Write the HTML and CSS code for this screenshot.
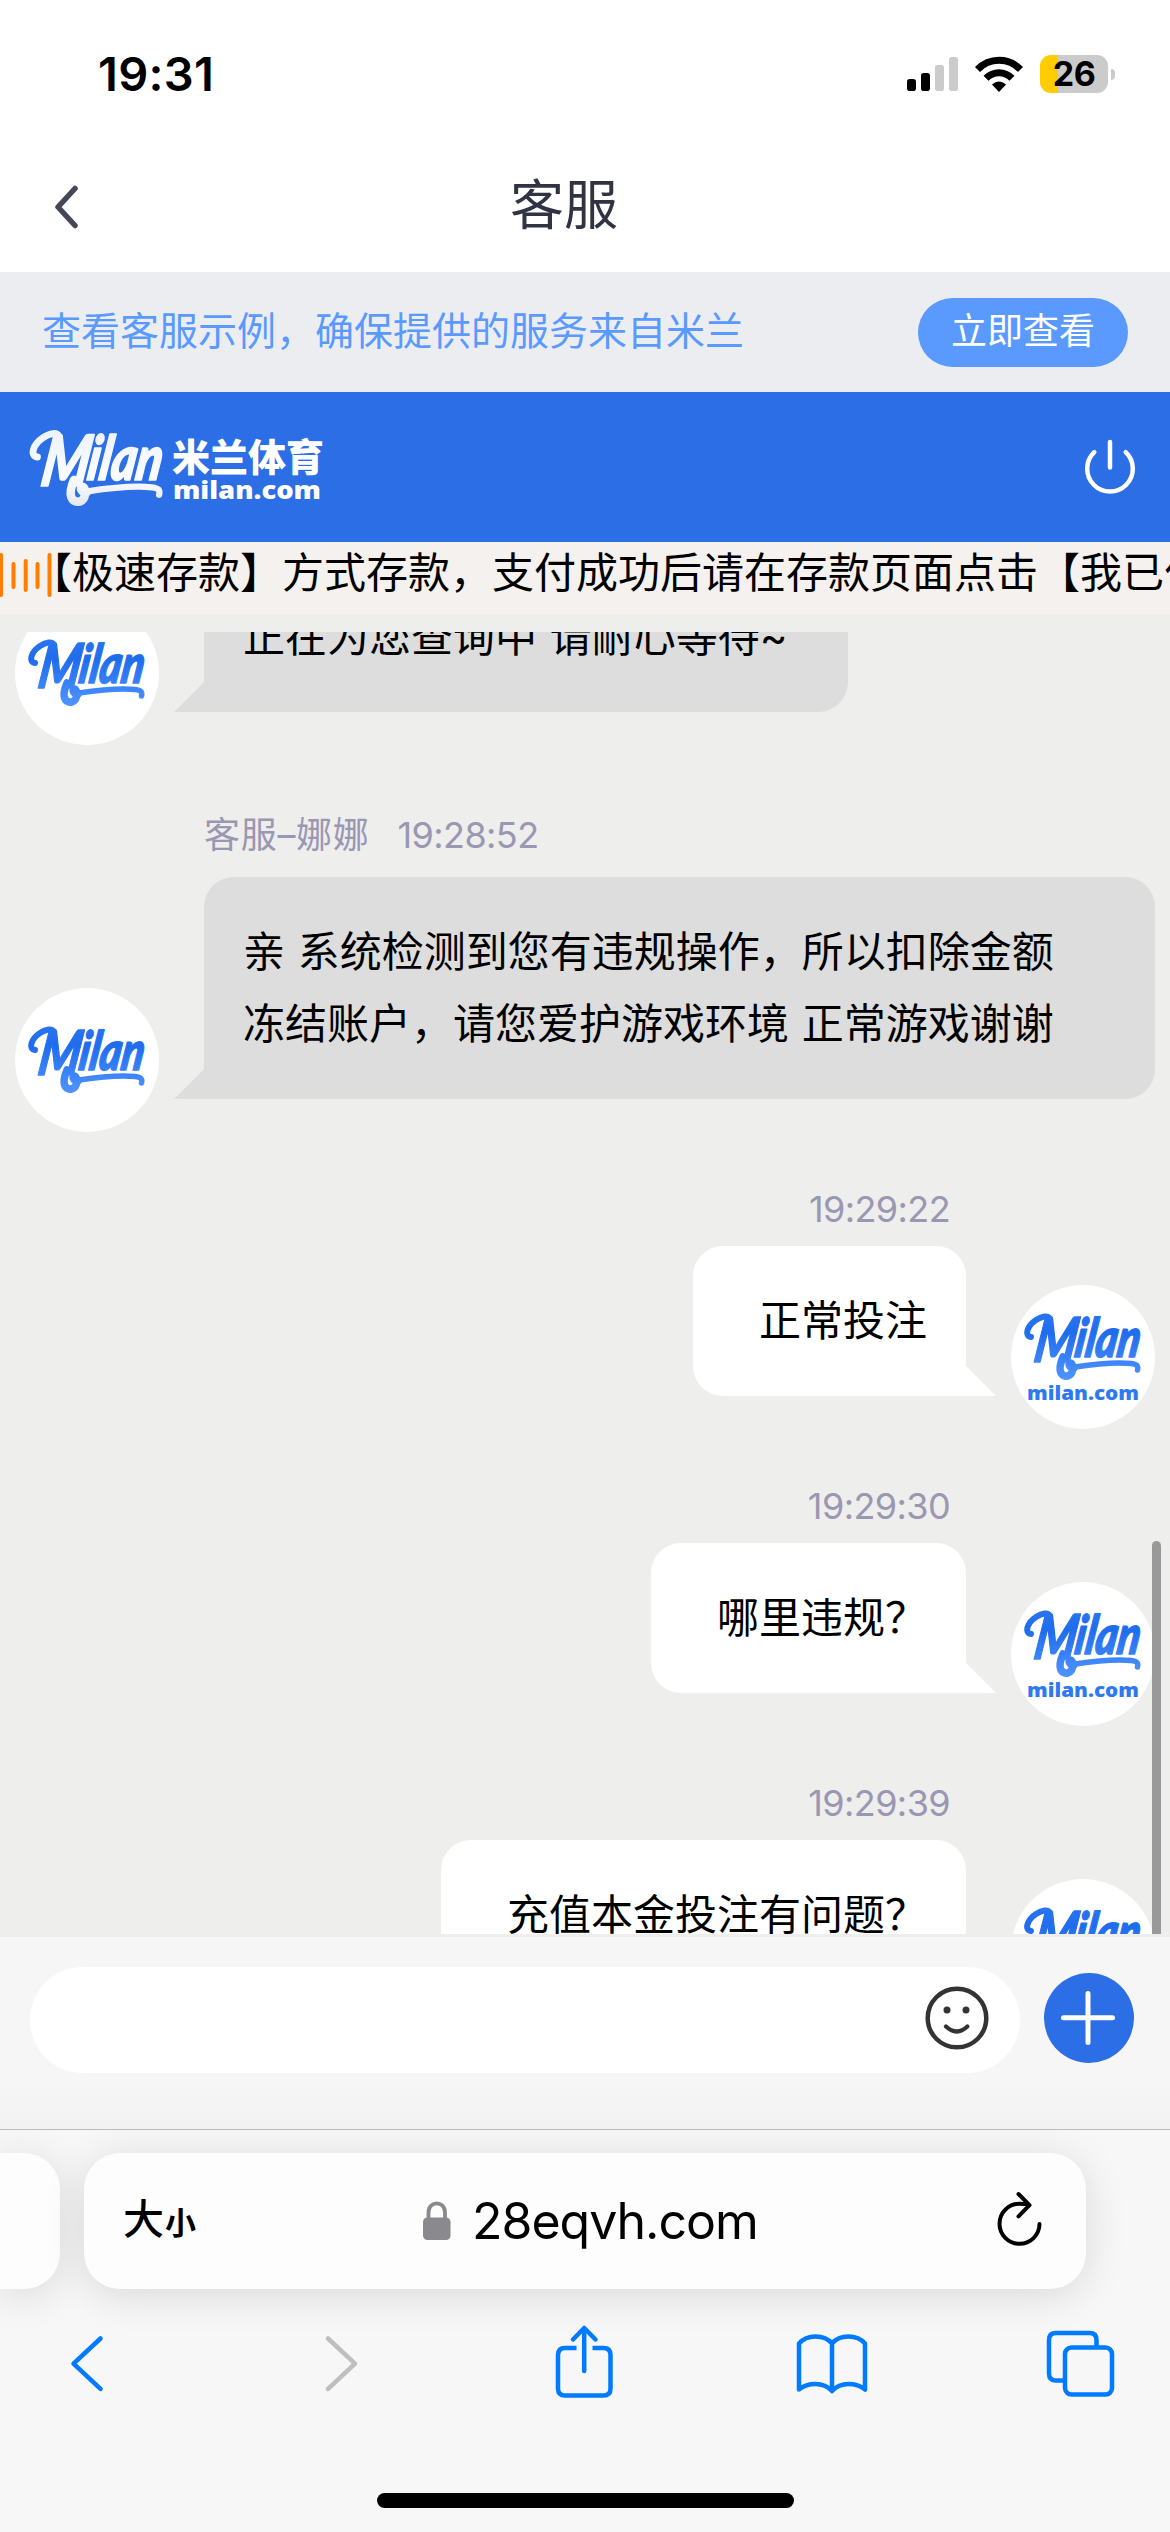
FILE: index.html
```html
<!DOCTYPE html>
<html lang="zh-CN">
<head>
<meta charset="utf-8">
<title>客服</title>
<link rel="stylesheet" href="styles.css">
</head>
<body>
<svg class="defs" width="0" height="0" aria-hidden="true">
  <defs>
    <linearGradient id="blueInk" gradientUnits="userSpaceOnUse" x1="0" y1="28" x2="0" y2="94">
      <stop offset="0" stop-color="#2a74ef"/><stop offset=".3" stop-color="#1f6cec"/><stop offset="1" stop-color="#4e93ff"/>
    </linearGradient>
    <linearGradient id="whiteInk" gradientUnits="userSpaceOnUse" x1="0" y1="28" x2="0" y2="94">
      <stop offset="0" stop-color="#edf3fd"/><stop offset=".6" stop-color="#fafcff"/><stop offset="1" stop-color="#e6eaf0"/>
    </linearGradient>
    <symbol id="wordmark" viewBox="10 24 126 74" overflow="visible">
      <g fill="none" stroke="var(--ink)" stroke-linecap="round" stroke-linejoin="round">
        <path stroke-width="6" d="M20 52C13 51 16 41 25 35C31 31 37 30 39 34"/>
        <path stroke-width="7.500" d="M52 72C46 86 50 92 57 91C63 89 63 78 59 78C57 80 59 83 63 83"/>
        <path stroke-width="5.500" d="M64 82C84 79 106 77 120 78.500C128 79.500 127 82 126.500 85"/>
      </g>
      <text class="script" transform="translate(0 74) skewX(-9) translate(0 -74)"><tspan class="cap" x="22" y="77" textLength="42" lengthAdjust="spacingAndGlyphs">M</tspan><tspan x="62" y="72.500" textLength="65" lengthAdjust="spacingAndGlyphs">ilan</tspan></text>
    </symbol>
  </defs>
</svg>

<header class="status">
  <span class="clock">19:31</span>
  <div class="indicators">
    <svg width="52" height="34" viewBox="0 0 52 34"><rect y="22" width="9" height="12" rx="2.800"/><rect x="14" y="16" width="9" height="18" rx="2.800"/><rect x="28" y="8" width="9" height="26" rx="2.800" fill="#cbcbcb"/><rect x="42" width="9" height="34" rx="2.800" fill="#cbcbcb"/></svg>
    <svg class="wifi" width="50" height="37" viewBox="0 0 50 37"><path fill="none" stroke="#000" stroke-width="7" d="M3.500 13.500C15.500 1.200 34.500 1.200 46.500 13.500M12 22.300C19.500 14.800 30.500 14.800 38 22.300"/><path d="M18 28.500Q25 22.500 32 28.500L25 36Z"/></svg>
    <span class="battery">26</span><i class="nub"></i>
  </div>
</header>

<nav class="titlebar">
  <svg width="24" height="44" viewBox="0 0 24 44"><path fill="none" stroke="#434757" stroke-width="5.500" stroke-linecap="round" stroke-linejoin="round" d="M21 3.500L4 22L21 40.500"/></svg>
  <h1>客服</h1>
</nav>

<section class="verify">
  <p>查看客服示例，确保提供的服务来自米兰</p>
  <a class="pill">立即查看</a>
</section>

<section class="brandbar">
  <svg class="brand" width="300" height="90" viewBox="0 0 300 90">
    <use class="white" href="#wordmark" x="6" y="3" width="144" height="84.600"/>
    <text class="brand-cn" x="152" y="49" textLength="152" lengthAdjust="spacingAndGlyphs">米兰体育</text>
    <text class="brand-en" x="153" y="77" textLength="148" lengthAdjust="spacingAndGlyphs">milan.com</text>
  </svg>
  <svg width="54" height="58" viewBox="0 0 54 58"><path fill="none" stroke="#fff" stroke-width="4.500" stroke-linecap="round" d="M27 4V29.500M11.300 14.200A22.800 22.800 0 1 0 42.700 14.200"/></svg>
</section>

<section class="notice">
  <svg width="54" height="46" viewBox="0 0 54 46"><path fill="none" stroke="#ff7d00" stroke-width="4" stroke-linecap="round" d="M1 3V43M13.500 12V35M25.700 9V38M37.500 12V35M49.500 3V43"/></svg>
  <p>【极速存款】方式存款，支付成功后请在存款页面点击【我已付款】</p>
</section>

<main class="chat">
  <div class="scroller">
    <article class="msg agent first">
      <svg class="avatar" viewBox="0 0 144 144"><use href="#wordmark" x="10" y="34" width="126" height="74"/></svg>
      <div class="body"><p class="bubble">正在为您查询中 请耐心等待~</p></div>
    </article>
    <article class="msg agent">
      <svg class="avatar" viewBox="0 0 144 144"><use href="#wordmark" x="10" y="34" width="126" height="74"/></svg>
      <div class="body">
        <div class="meta"><span>客服–娜娜</span><time>19:28:52</time></div>
        <p class="bubble">亲 系统检测到您有违规操作，所以扣除金额<br>冻结账户，请您爱护游戏环境 正常游戏谢谢</p>
      </div>
    </article>
    <article class="msg user">
      <div class="body"><div class="meta"><time>19:29:22</time></div><p class="bubble">正常投注</p></div>
      <svg class="avatar" viewBox="0 0 144 144"><use href="#wordmark" x="10" y="24" width="126" height="74"/><text class="site" x="16" y="115" textLength="112" lengthAdjust="spacingAndGlyphs">milan.com</text></svg>
    </article>
    <article class="msg user">
      <div class="body"><div class="meta"><time>19:29:30</time></div><p class="bubble">哪里违规？</p></div>
      <svg class="avatar" viewBox="0 0 144 144"><use href="#wordmark" x="10" y="24" width="126" height="74"/><text class="site" x="16" y="115" textLength="112" lengthAdjust="spacingAndGlyphs">milan.com</text></svg>
    </article>
    <article class="msg user">
      <div class="body"><div class="meta"><time>19:29:39</time></div><p class="bubble">充值本金投注有问题？</p></div>
      <svg class="avatar" viewBox="0 0 144 144"><use href="#wordmark" x="10" y="24" width="126" height="74"/><text class="site" x="16" y="115" textLength="112" lengthAdjust="spacingAndGlyphs">milan.com</text></svg>
    </article>
    <i class="thumb"></i>
  </div>
</main>

<footer class="composer">
  <div class="field">
    <svg width="64" height="64" viewBox="0 0 64 64"><circle cx="32" cy="32" r="29.300" fill="none" stroke="#333" stroke-width="4.500"/><circle cx="22" cy="24" r="3.500" fill="#333"/><circle cx="41" cy="24" r="3.500" fill="#333"/><path fill="none" stroke="#333" stroke-width="4.200" stroke-linecap="round" d="M21 40.500Q31.700 50.500 42.300 40.500"/></svg>
  </div>
  <svg width="90" height="90" viewBox="0 0 90 90"><circle cx="45" cy="45" r="45" fill="#2b6ee6"/><path stroke="#fff" stroke-width="5" stroke-linecap="round" d="M44 20.500V69.500M19.500 44.700H68.500"/></svg>
</footer>

<section class="browser">
  <div class="tabs">
    <div class="tab prev"></div>
    <div class="tab current">
      <span class="aa">大<small>小</small></span>
      <span class="address">
        <svg width="28" height="40" viewBox="0 0 28 40"><rect y="16.500" width="27.500" height="22.500" rx="4.500" fill="#8a8a8e"/><path fill="none" stroke="#8a8a8e" stroke-width="3.800" d="M5.500 18V11.500C5.500-.6 22-.6 22 11.500V18"/></svg>
        <span class="host">28eqvh.com</span>
      </span>
      <svg class="reload" width="48" height="58" viewBox="0 0 48 58"><path fill="none" stroke="#000" stroke-width="4" stroke-linecap="round" stroke-linejoin="round" d="M43.500 34A20 20 0 1 1 23.500 13.800C27 13.800 30 14 33 15.200M22.500 4L33.500 15.200L22.500 26.400"/></svg>
    </div>
  </div>
  <div class="tools">
    <svg width="74" height="74" viewBox="0 0 74 74"><path d="M51.500 11.500L24.500 36.700L51.500 61.900"/></svg>
    <svg class="off" width="74" height="74" viewBox="0 0 74 74"><path d="M30 11.500L57 36.700L30 61.900"/></svg>
    <svg width="74" height="74" viewBox="-1 0 74 74"><path stroke-linecap="butt" d="M29.500 21H18Q11 21 11 28V61.500Q11 68.500 18 68.500H56.500Q63.500 68.500 63.500 61.500V28Q63.500 21 56.500 21H45.500"/><path d="M37.200 44V1.500M26 12.500L37.200 1L48.500 12.500"/></svg>
    <svg width="74" height="74" viewBox="0 0 74 74"><path d="M37 16.500C29 7 12 7.500 4 16.500V62.500C13 55.500 28 54.500 37 64C46 54.500 61 55.500 70 62.500V16.500C62 7.500 45 7 37 16.500ZM37 16.500V64"/></svg>
    <svg width="74" height="74" viewBox="0 0 74 74"><rect x="22" y="20.500" width="47" height="47" rx="6.500"/><path stroke-linecap="butt" d="M53.500 19V13Q53.500 6 46.500 6H13Q6 6 6 13V46.500Q6 53.500 13 53.500H21"/></svg>
  </div>
  <i class="home"></i>
</section>
</body>
</html>
```
FILE: styles.css
```css
* { box-sizing: border-box; margin: 0; padding: 0; }

body {
  width: 1170px;
  height: 2532px;
  overflow: hidden;
  display: flex;
  flex-direction: column;
  background: #fff;
  color: #000;
  font-family: Inter, "Noto Sans CJK SC", sans-serif;
  text-spacing-trim: space-all;
}

svg { display: block; flex: none; }
.defs { position: absolute; }

/* status bar */
.status {
  height: 150px;
  flex: none;
  display: flex;
  justify-content: space-between;
  align-items: flex-start;
  padding: 55px 55px 0 98px;
}
.clock { font-size: 47px; font-weight: 600; line-height: 38px; letter-spacing: .3px; }
.indicators { display: flex; align-items: center; height: 38px; }
.wifi { margin-left: 15px; }
.battery {
  width: 68px;
  height: 38px;
  margin-left: 16px;
  border-radius: 11px;
  background: linear-gradient(90deg, #ffcc00 18px, #cbcbcb 18px);
  font-size: 34px;
  font-weight: 700;
  line-height: 38px;
  text-align: center;
  letter-spacing: -.5px;
}
.nub { width: 4px; height: 11px; margin-left: 3px; border-radius: 0 5px 5px 0; background: #cbcbcb; }

/* page title */
.titlebar { height: 122px; flex: none; display: flex; align-items: center; padding: 0 54px 10px; }
.titlebar svg { margin-top: 2px; }
.titlebar h1 {
  margin-left: 432px;
  color: #2f3342;
  font-size: 54px;
  font-weight: 400;
  line-height: 60px;
}

.verify {
  height: 120px;
  flex: none;
  display: flex;
  align-items: center;
  justify-content: space-between;
  padding: 0 42px;
  background: #ecedf1;
}
.verify p { padding-bottom: 2px; color: #5a9aff; font-size: 39px; line-height: 60px; }
.pill {
  width: 210px;
  height: 69px;
  border-radius: 35px;
  background: #5a9aff;
  color: #fff;
  font-size: 36px;
  line-height: 67px;
  text-align: center;
}

.brandbar {
  height: 150px;
  flex: none;
  display: flex;
  align-items: center;
  justify-content: space-between;
  padding: 0 33px 0 20px;
  background: #2b6ee6;
}
.brand { overflow: visible; }
.script { font: italic 900 54px Lato, sans-serif; fill: var(--ink); stroke: var(--ink); stroke-width: 1.5; stroke-linejoin: round; }
.cap { font-size: 62px; }
.white { --ink: url(#whiteInk); }
.brand-cn { font: 900 38px "Noto Sans CJK SC", sans-serif; fill: #fff; }
.brand-en { font: 800 24px "Open Sans", sans-serif; fill: #fff; }

.notice { height: 72px; flex: none; display: flex; align-items: flex-start; background: #f5f1ee; overflow: hidden; }
.notice svg { margin: 10px -24px 0 0; }
.notice p { flex: none; white-space: nowrap; font-size: 42px; line-height: 61px; }

/* conversation */
.chat { height: 1323px; flex: none; padding: 18px 0 3px; background: #eeeeec; }
.scroller { position: relative; height: 1302px; overflow: hidden; }
.msg { display: flex; align-items: flex-end; padding: 0 15px; }
.msg.first { margin-top: -70px; }
.avatar {
  --ink: url(#blueInk);
  width: 144px;
  height: 144px;
  margin-bottom: -33px;
  border-radius: 50%;
  background: #fff;
}
.site { font: 800 19px "Open Sans", sans-serif; fill: #2f78f3; }
.meta { display: flex; gap: 28px; color: #9a97b3; font-size: 36px; line-height: 40px; white-space: nowrap; }
.meta span { letter-spacing: .7px; }
.meta time { letter-spacing: -.6px; }
.bubble { position: relative; border-radius: 30px; font-size: 42px; line-height: 72px; white-space: nowrap; word-spacing: 1px; }
.bubble::after { content: ""; position: absolute; bottom: 0; width: 30px; height: 30px; background: inherit; }

.agent .body { flex: 1; margin-left: 45px; display: flex; flex-direction: column; align-items: stretch; }
.agent.first .body { align-items: flex-start; }
.agent .meta { margin: 103px 0 22px; }
.agent .bubble { padding: 39px 66px 39px 39px; border-bottom-left-radius: 0; background: #ddd; }
.agent.first .bubble { padding-right: 60px; }
.agent .bubble::after { left: -30px; clip-path: polygon(100% 0, 100% 100%, 0 100%); }

.user { justify-content: flex-end; }
.user .body { margin-right: 45px; display: flex; flex-direction: column; align-items: flex-end; }
.user .meta { margin: 90px 16px 17px 0; }
.user .bubble { padding: 39px 39px 39px 66px; border-bottom-right-radius: 0; background: #fff; }
.user .bubble::after { right: -30px; clip-path: polygon(0 0, 100% 100%, 0 100%); }

.thumb {
  position: absolute;
  right: 9px;
  top: 909px;
  width: 9px;
  height: 400px;
  border-radius: 5px;
  background: #999;
}

.composer {
  height: 192px;
  flex: none;
  display: flex;
  align-items: flex-start;
  gap: 24px;
  padding: 30px 36px 0 30px;
  background: linear-gradient(#f6f6f6 75%, #f2f2f2);
}
.field {
  flex: 1;
  height: 106px;
  border-radius: 53px;
  background: #fff;
  display: flex;
  justify-content: flex-end;
  padding: 19px 31px 0 0;
}
.composer > svg { margin-top: 6px; }

/* browser chrome */
.browser {
  flex: 1;
  display: flex;
  flex-direction: column;
  align-items: center;
  border-top: 1px solid #b9bab9;
  background: #f7f7f7;
  overflow: hidden;
}
.tabs { width: 100%; display: flex; gap: 24px; padding-top: 23px; }
.tab { height: 136px; background: #fdfdfd; box-shadow: 0 6px 42px rgba(0, 0, 0, .12); }
.prev { width: 60px; border-radius: 0 36px 36px 0; }
.current { width: 1002px; border-radius: 36px; display: flex; align-items: center; padding: 0 42px 0 39px; }
.aa { display: flex; align-items: baseline; width: 300px; font-size: 41px; font-weight: 500; line-height: 60px; }
.aa small { font-size: 31px; font-weight: 700; margin-left: 1px; }
.address { flex: 1; display: flex; align-items: center; gap: 21px; }
.host { font-size: 50px; line-height: 60px; letter-spacing: -1px; white-space: nowrap; }
.reload { margin-top: -5px; }
.tools { width: 100%; height: 74px; margin-top: 38px; display: flex; justify-content: space-between; padding: 0 53px 0 49px; }
.tools svg { fill: none; stroke: #007aff; stroke-width: 4.5; stroke-linecap: round; stroke-linejoin: round; overflow: visible; }
.tools .off { stroke: #bfbfbf; }
.home { width: 417px; height: 15px; margin-top: 92px; border-radius: 8px; background: #000; }
```
